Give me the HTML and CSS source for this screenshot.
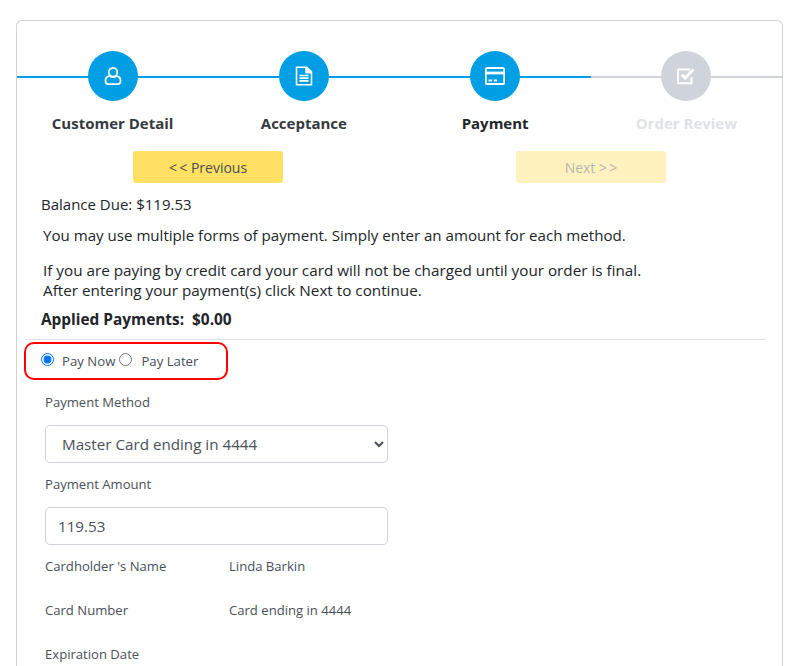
FILE: index.html
```html
<!DOCTYPE html>
<html lang="en">
<head>
<meta charset="utf-8">
<title>Payment</title>
<link rel="stylesheet" href="styles.css">
</head>
<body>
<main class="card">
  <ol class="stepper">
    <li class="step done">
      <span class="dot"><svg viewBox="0 0 20 20" width="20" height="20" fill="none" stroke="#fff" stroke-width="1.7"><circle cx="10" cy="6.200" r="4.300"/><path d="M6.600 9.800C3.800 10.400 2.500 11.800 2.500 14v1.200c0 1.500 1.100 2.900 2.800 2.900h9.400c1.700 0 2.800-1.400 2.800-2.900V14c0-2.200-1.300-3.600-4.100-4.200-1 .9-2.100 1.300-3.400 1.300s-2.400-.4-3.400-1.300z"/></svg></span>
      <span class="step-label">Customer Detail</span>
    </li>
    <li class="step done">
      <span class="dot"><svg viewBox="0 0 20 20" width="20" height="20" fill="none" stroke="#fff" stroke-width="1.600"><path d="M2.500 1.200h10.300l4.700 4.700v12.900h-15z"/><path d="M12 1.200v5.500h5.500" fill="#fff"/><path d="M5.500 9.500h9M5.500 12.200h9M5.500 14.900h9" stroke-width="1.700"/></svg></span>
      <span class="step-label">Acceptance</span>
    </li>
    <li class="step current">
      <span class="dot"><svg viewBox="0 0 20 20" width="20" height="20" fill="none" stroke="#fff"><rect x=".8" y="2" width="18.400" height="16" rx="1.500" stroke-width="1.800"/><path d="M1 7h18" stroke-width="2.800"/><path d="M3.500 14.500h3.600M8.800 14.500h3.200" stroke-width="2"/></svg></span>
      <span class="step-label">Payment</span>
    </li>
    <li class="step todo">
      <span class="dot"><svg viewBox="0 0 20 20" width="20" height="20" fill="none" stroke="#fff"><path d="M15.500 11v6.300H2V3.500h12" stroke-width="2"/><path d="M5.700 8.500l3.500 3.500 8.300-8.700" stroke-width="3"/></svg></span>
      <span class="step-label">Order Review</span>
    </li>
  </ol>

  <div class="nav-buttons">
    <button class="btn" type="button">&lt;&thinsp;&lt; Previous</button>
    <button class="btn btn-off" type="button" disabled>Next &gt;&thinsp;&gt;</button>
  </div>

  <p class="balance">Balance Due: $119.53</p>
  <p class="note">You may use multiple forms of payment. Simply enter an amount for each method.</p>
  <p class="note note-wide">If you are paying by credit card your card will not be charged until your order is final.<br>After entering your payment(s) click Next to continue.</p>
  <p class="applied">Applied Payments:&nbsp; $0.00</p>
  <hr class="rule">

  <div class="pay-when">
    <label class="radio"><input type="radio" name="when" checked><span>Pay Now</span></label>
    <label class="radio radio-next"><input type="radio" name="when"><span>Pay Later</span></label>
  </div>

  <form class="form">
    <label class="field-label" for="method">Payment Method</label>
    <select class="control" id="method">
      <option>Master Card ending in 4444</option>
    </select>
    <label class="field-label" for="amount">Payment Amount</label>
    <input class="control" id="amount" type="text" value="119.53">
    <dl class="details">
      <dt>Cardholder 's Name</dt><dd>Linda Barkin</dd>
      <dt>Card Number</dt><dd>Card ending in 4444</dd>
      <dt>Expiration Date</dt><dd></dd>
    </dl>
  </form>
</main>
</body>
</html>
```

FILE: styles.css
```css
* { box-sizing: border-box; }
html, body { height: 666px; overflow: hidden; }
body {
  margin: 0;
  padding: 20px 14px 0 16px;
  background: #fff;
  color: #212529;
  font-family: "Open Sans", "Noto Sans", sans-serif;
  font-size: 14px;
}
.card {
  border: 1px solid #d2d2d2;
  border-bottom: 0;
  border-radius: 6px 6px 0 0;
  height: 700px;
  padding-top: 30px;
}
.stepper {
  display: grid;
  grid-template-columns: repeat(4, 1fr);
  list-style: none;
  margin: 0;
  padding: 0;
}
.step {
  display: flex;
  flex-direction: column;
  align-items: center;
  position: relative;
}
.step::before {
  content: "";
  position: absolute;
  left: 0;
  right: 0;
  top: 25px;
  height: 2px;
  background: #009fe3;
}
.step.todo::before { background: #ced4da; }
.dot {
  position: relative;
  width: 50px;
  height: 50px;
  border-radius: 50%;
  background: #009fe3;
  display: flex;
  align-items: center;
  justify-content: center;
}
.todo .dot { background: #ced4da; }
.step-label {
  margin-top: 11px;
  font-size: 15px;
  line-height: 22px;
  font-weight: 700;
  color: #343a40;
}
.current .step-label { color: #212529; }
.todo .step-label { color: #dee2e6; }
.nav-buttons {
  display: grid;
  grid-template-columns: 150px 150px;
  justify-content: space-between;
  padding: 0 116px;
  margin-top: 17px;
}
.btn {
  height: 32px;
  border: 0;
  border-radius: 3px;
  background: #ffe063;
  color: #495057;
  font: inherit;
  font-size: 14px;
  padding: 0;
}
.btn-off {
  background: #fff2bf;
  color: #b4b6b4;
}
.balance, .note, .applied { margin: 0; }
.balance { margin: 10px 0 0 24px; line-height: 22px; font-size: 15px; }
.note { margin: 10px 0 0 26px; line-height: 20px; font-size: 15.100px; }
.note + .note { margin-top: 15px; }
.note-wide { font-size: 15.250px; }
.applied { margin: 9px 0 0 24px; font-weight: 700; font-size: 15.400px; line-height: 22px; }
.rule { margin: 8px 16px 0 8px; border: 0; border-top: 1px solid #dee2e6; }
.pay-when {
  display: flex;
  align-items: center;
  width: 204px;
  height: 38px;
  margin: 2px 0 0 7px;
  padding-left: 15px;
  border: 2px solid #f00;
  border-radius: 10px;
  font-size: 13.200px;
  color: #495057;
}
.radio { display: flex; align-items: center; }
.radio input { margin: -3px 8px 0 0; width: 13px; height: 13px; accent-color: #0075ff; }
.radio-next { margin-left: 4px; }
.radio-next input { margin-right: 9px; }
.form {
  padding: 12px 0 0 28px;
  width: 371px;
  font-size: 13.100px;
  color: #495057;
}
.field-label { display: block; line-height: 20px; }
.control {
  display: block;
  width: 100%;
  height: 38px;
  margin: 13px 0 11px;
  padding: 0 12px;
  border: 1px solid #ced4da;
  border-radius: 5px;
  background: #fff;
  color: #495057;
  font: inherit;
  font-size: 15.200px;
}
.details {
  display: grid;
  grid-template-columns: 184px 1fr;
  grid-auto-rows: 44px;
  margin: 11px 0 0;
}
.details dt, .details dd { margin: 0; line-height: 20px; }
```
